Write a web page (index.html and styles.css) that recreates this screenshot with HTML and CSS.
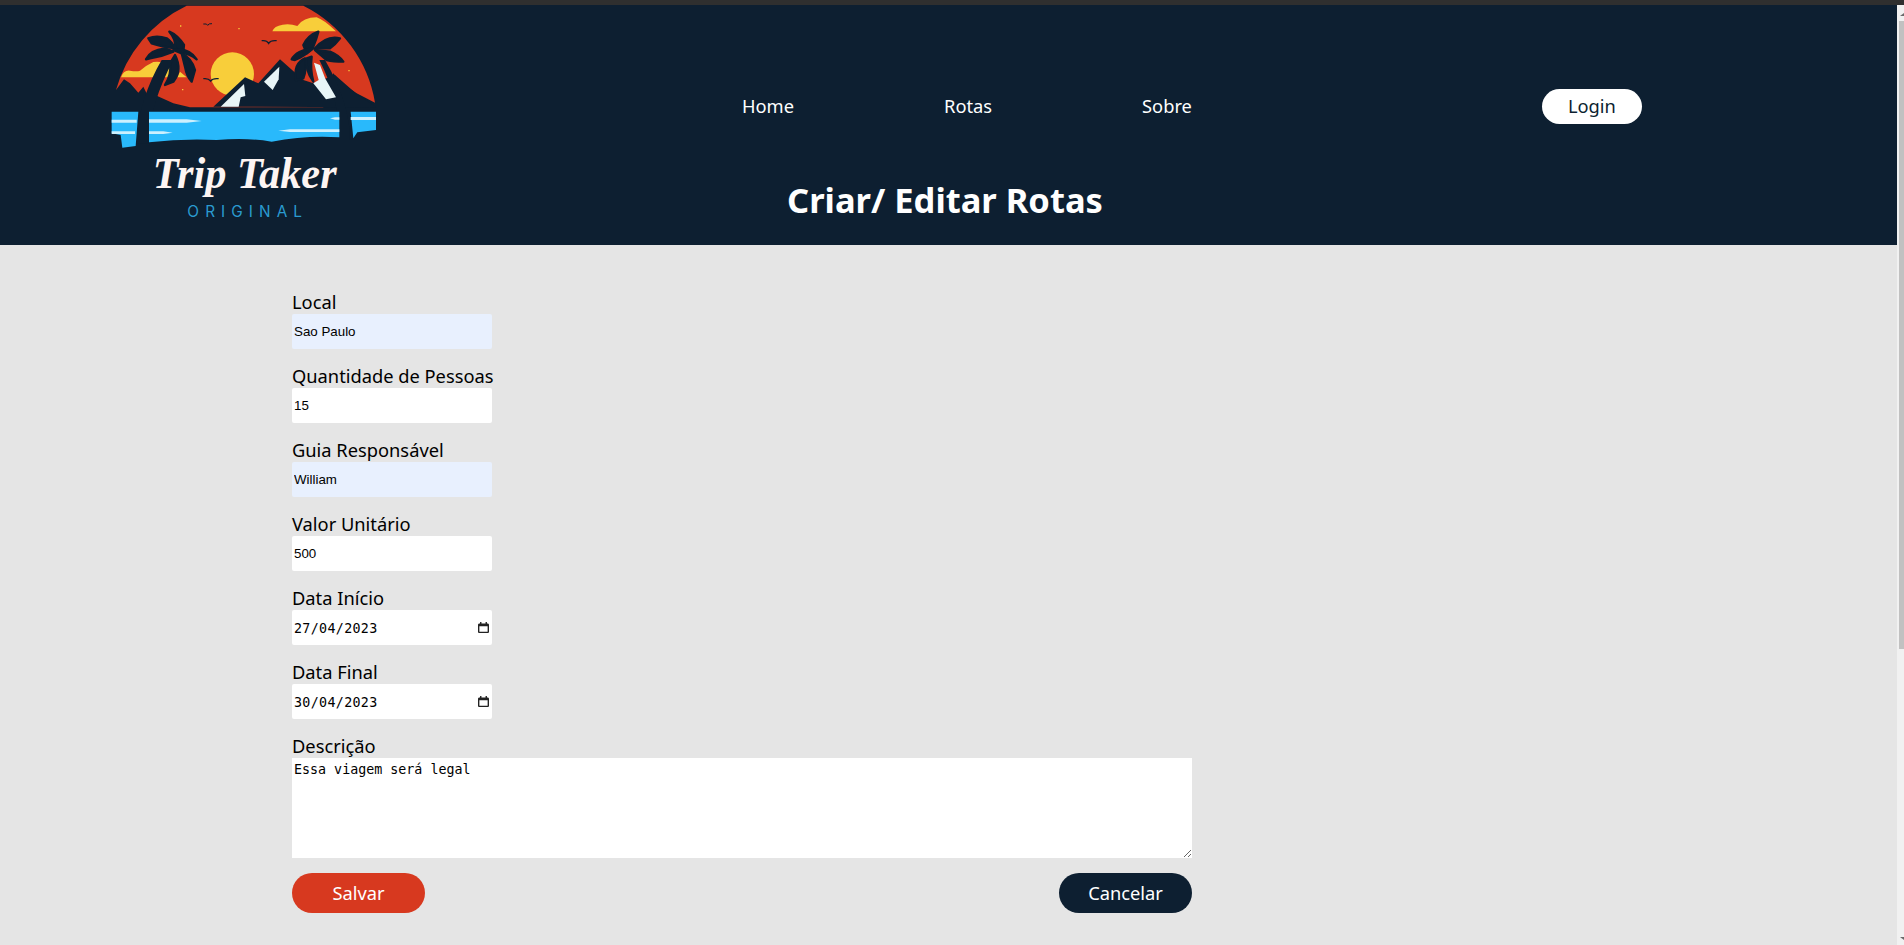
FILE: index.html
```html
<!DOCTYPE html>
<html lang="pt-br">
<head>
    <meta charset="UTF-8">
    <meta name="viewport" content="width=device-width, initial-scale=1.0">
    <title>Criar/ Editar Rotas - Trip Taker</title>
    <link rel="stylesheet" href="styles.css">
</head>
<body>

    <div class="barra-topo"></div>

    <div class="janela">
        <div class="pagina">
            <header class="cabecalho">
                <svg class="logo" viewBox="60 15 810 660" role="img" aria-label="Trip Taker Original">
                    <!-- ceu e nuvens -->
                    <path fill="#d7391f" d="M78,270 A400,400 0 0 1 290,17 L640,17 A400,400 0 0 1 855,308 L800,280 L755,250 L730,220 L700,270 L700,322 L300,322 L250,310 L195,285 L180,300 L160,260 L145,278 L120,250 L102,238 Z"/>
                    <circle fill="#f8ce3a" cx="427" cy="222" r="65"/>
                    <path fill="#f8ce3a" d="M547,94 Q552,78 578,74 Q600,70 622,78 Q640,52 680,52 Q700,58 738,94 Z"/>
                    <path fill="#f8ce3a" d="M93,232 Q100,210 120,212 Q140,215 150,212 Q170,195 190,186 Q215,184 225,190 L245,210 L232,232 Z M270,215 L290,232 H262 Z"/>
                    <path fill="#f8ce3a" d="M270,76 h4 v4 h-4 Z M445,84 h4 v4 h-4 Z M276,267 h4 v4 h-4 Z M775,210 h4 v4 h-4 Z"/>
                    <!-- montanhas -->
                    <path fill="#0d1f31" d="M370,320 L465,232 L505,250 L570,178 L640,240 L670,250 L735,225 L800,282 L860,322 Z"/>
                    <path fill="#e8f5f7" d="M392,320 L462,252 L466,288 L452,292 L446,320 Z"/>
                    <path fill="#e8f5f7" d="M522,245 L568,200 L566,238 L548,270 Z"/>
                    <!-- passaros -->
                    <path fill="none" stroke="#0d1f31" stroke-width="3" d="M340,72 Q352,70 353,76 Q356,70 366,71"/>
                    <path fill="none" stroke="#0d1f31" stroke-width="4" d="M515,122 Q530,120 536,130 Q542,120 560,122"/>
                    <path fill="none" stroke="#0d1f31" stroke-width="4" d="M340,236 Q355,234 362,243 Q368,234 386,236"/>
                    <g fill="#0d1f31" stroke="#0d1f31" stroke-width="7" stroke-linejoin="round">
                        <!-- palmeira esquerda -->
                        <path d="M175,115 Q200,105 230,115 Q245,125 255,145 Q215,140 185,130 Z"/>
                        <path d="M238,95 Q262,105 282,135 L280,155 L255,145 Q260,120 238,95 Z"/>
                        <path d="M168,178 Q180,150 225,145 L250,155 Q215,170 180,175 Z"/>
                        <path d="M250,150 Q295,140 320,178 Q300,160 275,160 Z"/>
                        <path d="M275,160 Q305,175 315,210 L305,245 Q290,230 285,200 Z"/>
                        <path d="M255,165 Q278,210 250,245 L225,255 Q245,225 240,190 Z"/>
                        <!-- palmeira direita -->
                        <path d="M685,95 Q655,105 640,135 L650,160 L670,140 Q680,115 685,95 Z"/>
                        <path d="M750,115 Q710,105 675,145 L720,145 Q735,135 750,115 Z"/>
                        <path d="M675,150 L720,155 Q745,165 760,185 Q730,185 710,180 Z"/>
                        <path d="M605,178 Q620,150 670,145 Q640,170 615,180 Z"/>
                        <path d="M645,175 Q610,190 618,240 L640,235 Q650,210 645,175 Z"/>
                        <path d="M650,175 Q645,210 670,245 Q660,210 665,170 Z"/>
                    </g>
                    <path fill="#0d1f31" d="M135,430 L175,430 Q180,310 250,180 L215,180 Q150,290 135,430 Z"/>
                    <path fill="#0d1f31" d="M748,420 L780,420 Q780,310 705,180 L688,180 Q750,300 748,420 Z"/>
                    <path fill="#e8f5f7" d="M672,188 L690,195 L706,236 L738,292 L708,298 L670,250 L686,240 Z"/>
                    <!-- agua -->
                    <path fill="#29b9fb" d="M65,335 L145,335 L137,438 L97,443 L92,405 L65,400 Z"/>
                    <path fill="#29b9fb" d="M177,335 L748,335 L748,412 Q650,405 545,425 Q470,412 380,420 Q280,415 177,427 Z"/>
                    <path fill="#29b9fb" d="M782,335 L858,335 L858,390 L802,397 L790,415 Z"/>
                    <path fill="#cdf0fe" d="M65,359 H140 V368 H65 Z M177,358 H290 L335,363 L290,368 H177 Z M65,394 H135 V402 H65 Z M177,394 H220 L248,398 L220,402 H177 Z M565,392 L600,388 H748 V396 H600 Z M720,355 L735,352 H748 V359 H735 Z M782,351 H858 V360 H782 Z"/>
                    <!-- nome -->
                    <text class="logo-nome" x="188" y="565" textLength="552" lengthAdjust="spacingAndGlyphs">Trip Taker</text>
                    <text class="logo-sub" x="292" y="652" textLength="344">ORIGINAL</text>
                </svg>

                <div class="cabecalho-direita">
                    <nav class="menu">
                        <a href="#">Home</a>
                        <a href="#">Rotas</a>
                        <a href="#">Sobre</a>
                        <a href="#" class="btn-login">Login</a>
                    </nav>
                    <h1>Criar/ Editar Rotas</h1>
                </div>
            </header>

            <main class="conteudo">
                <form class="formulario">
                    <div class="campo">
                        <label for="local">Local</label>
                        <input type="text" id="local" class="preenchido" value="Sao Paulo">
                    </div>
                    <div class="campo">
                        <label for="pessoas">Quantidade de Pessoas</label>
                        <input type="number" id="pessoas" value="15">
                    </div>
                    <div class="campo">
                        <label for="guia">Guia Responsável</label>
                        <input type="text" id="guia" class="preenchido" value="William">
                    </div>
                    <div class="campo">
                        <label for="valor">Valor Unitário</label>
                        <input type="number" id="valor" value="500">
                    </div>
                    <div class="campo">
                        <label for="inicio">Data Início</label>
                        <div class="data">
                            <input type="text" id="inicio" value="27/04/2023">
                            <svg class="calendario" viewBox="0 0 16 16"><path d="M14 2H13V0H11V2H5V0H3V2H2C.9 2 0 2.9 0 4V14C0 15.1.9 16 2 16H14C15.1 16 16 15.1 16 14V4C16 2.9 15.1 2 14 2ZM14 14H2V6H14V14Z"/></svg>
                        </div>
                    </div>
                    <div class="campo">
                        <label for="final">Data Final</label>
                        <div class="data">
                            <input type="text" id="final" value="30/04/2023">
                            <svg class="calendario" viewBox="0 0 16 16"><path d="M14 2H13V0H11V2H5V0H3V2H2C.9 2 0 2.9 0 4V14C0 15.1.9 16 2 16H14C15.1 16 16 15.1 16 14V4C16 2.9 15.1 2 14 2ZM14 14H2V6H14V14Z"/></svg>
                        </div>
                    </div>
                    <div class="campo-descricao">
                        <label for="descricao">Descrição</label>
                        <textarea id="descricao">Essa viagem será legal</textarea>
                    </div>
                    <div class="botoes">
                        <button type="submit" class="btn btn-salvar">Salvar</button>
                        <button type="button" class="btn btn-cancelar">Cancelar</button>
                    </div>
                </form>
            </main>
        </div>

        <div class="rolagem">
            <span class="seta-cima"></span>
            <span class="polegar"></span>
            <span class="seta-baixo"></span>
        </div>
    </div>

</body>
</html>
```

FILE: styles.css
```css
* {
    box-sizing: border-box;
}
body {
    font-family: "Noto Sans", Arial, sans-serif;
    margin: 0;
    height: 100vh;
    overflow: hidden;
    background-color: #2f2f2f;
}
.barra-topo {
    height: 5px;
    background-color: #2f2f2f;
}
.janela {
    display: flex;
    height: calc(100vh - 5px);
}
.pagina {
    flex: 1;
    overflow: hidden;
    background-color: #e5e5e5;
}
.rolagem {
    display: flex;
    flex-direction: column;
    width: 7px;
    padding-left: 2px;
    overflow: hidden;
    background-color: #f1f1f1;
}
.polegar {
    flex-shrink: 0;
    height: 628px;
    margin-top: 5px;
    background-color: #c1c1c1;
}
.seta-cima, .seta-baixo {
    flex-shrink: 0;
    width: 0;
    height: 0;
    margin-left: 1px;
    border-left: 4px solid transparent;
    border-right: 4px solid transparent;
}
.seta-cima {
    margin-top: 8px;
    border-bottom: 3px solid #6a6a6a;
}
.seta-baixo {
    margin-top: auto;
    margin-bottom: 5px;
    border-top: 3px solid #6a6a6a;
}
.cabecalho {
    display: flex;
    height: 240px;
    padding-left: 110px;
    background-color: #0d1f31;
}
.logo {
    width: 270px;
    height: 220px;
    flex-shrink: 0;
}
.logo-nome {
    font-family: "Liberation Serif", serif;
    font-style: italic;
    font-weight: bold;
    font-size: 136px;
    fill: #fdf5f3;
}
.logo-sub {
    font-family: Inter, sans-serif;
    font-size: 46px;
    fill: #2a9bd0;
}
.cabecalho-direita {
    display: flex;
    flex-direction: column;
}
.menu {
    display: flex;
    align-items: flex-start;
    gap: 150px;
    height: 35px;
    margin: 84px 0 0 362px;
}
.menu a {
    color: white;
    font-size: 18.3px;
    line-height: 33px;
    text-decoration: none;
}
.menu .btn-login {
    width: 100px;
    height: 35px;
    margin-left: 200px;
    line-height: 34px;
    text-align: center;
    border-radius: 18px;
    background-color: white;
    color: #0d1f31;
}
h1 {
    margin: 51px 0 0 407px;
    color: white;
    font-size: 34.5px;
    line-height: 49px;
    white-space: nowrap;
}
.conteudo {
    height: 700px;
    padding: 44px 0 0 292px;
}
.formulario {
    width: 900px;
}
.campo {
    margin-bottom: 14px;
}
label {
    display: block;
    height: 25px;
    font-size: 18.3px;
    line-height: 25px;
    white-space: nowrap;
    color: black;
}
input {
    display: block;
    width: 200px;
    height: 35px;
    padding: 2px;
    border: none;
    border-radius: 2px;
    background-color: white;
}
input.preenchido {
    background-color: #e8f0fe;
}
input[type="number"]::-webkit-inner-spin-button {
    display: none;
}
.data {
    position: relative;
    width: 200px;
}
.data input {
    padding-top: 4px;
    font-family: "DejaVu Sans Mono", monospace;
    font-size: 13.33px;
    letter-spacing: 0.33px;
}
.calendario {
    position: absolute;
    top: 12px;
    right: 3px;
    width: 11px;
    height: 11px;
    fill: #222;
}
textarea {
    display: block;
    width: 900px;
    height: 100px;
    padding: 4px 2px 2px;
    border: none;
    font-family: "DejaVu Sans Mono", monospace;
    font-size: 13.33px;
    background-color: white;
}
.botoes {
    display: flex;
    justify-content: space-between;
    margin-top: 15px;
}
.btn {
    width: 133px;
    height: 40px;
    padding: 0 0 2px;
    border: none;
    border-radius: 20px;
    font-family: "Noto Sans", Arial, sans-serif;
    font-size: 18.3px;
    color: white;
    cursor: pointer;
}
.btn-salvar {
    background-color: #d7391f;
}
.btn-cancelar {
    background-color: #0d1f31;
}
```
